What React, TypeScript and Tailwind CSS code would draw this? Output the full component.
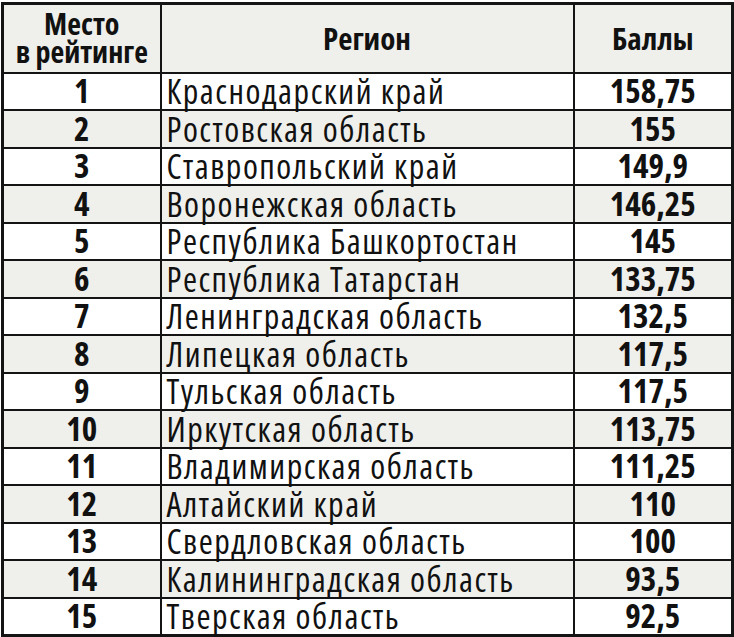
const rows: [number, string, string][] = [
  [1, 'Краснодарский край', '158,75'],
  [2, 'Ростовская область', '155'],
  [3, 'Ставропольский край', '149,9'],
  [4, 'Воронежская область', '146,25'],
  [5, 'Республика Башкортостан', '145'],
  [6, 'Республика Татарстан', '133,75'],
  [7, 'Ленинградская область', '132,5'],
  [8, 'Липецкая область', '117,5'],
  [9, 'Тульская область', '117,5'],
  [10, 'Иркутская область', '113,75'],
  [11, 'Владимирская область', '111,25'],
  [12, 'Алтайский край', '110'],
  [13, 'Свердловская область', '100'],
  [14, 'Калининградская область', '93,5'],
  [15, 'Тверская область', '92,5'],
];

const line = 'border-2 border-[#141414]';
const bold = 'font-bold [font-stretch:75%]';

export default function App() {
  return (
    <div className="w-[734px] h-[637px] bg-white pt-[2px] pl-[1px] font-['Open_Sans',sans-serif] text-[#111]">
      <table className="w-[733px] table-fixed border-collapse border-[3px] border-[#141414]">
        <thead>
          <tr className="h-[69px] bg-[#efefeb]">
            <th className={`w-[158px] ${line} ${bold} p-0 text-[30px] leading-[28px] whitespace-nowrap`}>
              Место
              <br />в рейтинге
            </th>
            <th className={`w-[413px] ${line} ${bold} p-0 text-[31px] leading-[30px]`}>Регион</th>
            <th className={`${line} ${bold} p-0 text-[31px] leading-[30px]`}>Баллы</th>
          </tr>
        </thead>
        <tbody>
          {rows.map(([place, region, score]) => (
            <tr key={place} className={`h-[37.5px] ${place % 2 === 0 ? 'bg-[#efefeb]' : 'bg-white'}`}>
              <td className={`${line} ${bold} p-0 text-center text-[33px] leading-[30px]`}>{place}</td>
              <td className={`${line} py-0 pl-[5px] pr-0 text-[34px] leading-[30px] tracking-[1.5px] [font-stretch:75%] whitespace-nowrap`}>
                {region}
              </td>
              <td className={`${line} ${bold} p-0 text-center text-[33px] leading-[30px]`}>{score}</td>
            </tr>
          ))}
        </tbody>
      </table>
    </div>
  );
}
